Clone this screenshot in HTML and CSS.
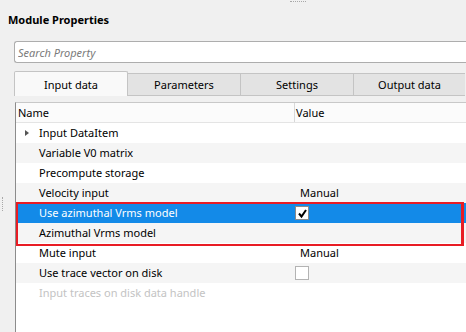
FILE: index.html
```html
<!DOCTYPE html>
<html lang="en">
<head>
    <meta charset="UTF-8">
    <title>Module Properties</title>
    <link rel="stylesheet" href="styles.css">
</head>
<body>
    <div class="top-grip"></div>
    <h2 class="title">Module Properties</h2>
    <input class="search" type="text" placeholder="Search Property">

    <div class="tabs">
        <div class="tab active">Input data</div>
        <div class="tab">Parameters</div>
        <div class="tab">Settings</div>
        <div class="tab last">Output data</div>
    </div>

    <div class="pane">
        <div class="side-grip"></div>
        <div class="grid">
            <div class="row head">
                <div class="name">Name</div>
                <div class="value">Value</div>
            </div>
            <div class="row">
                <div class="name"><span class="arrow"></span>Input DataItem</div>
                <div class="value"></div>
            </div>
            <div class="row alt">
                <div class="name">Variable V0 matrix</div>
                <div class="value"></div>
            </div>
            <div class="row">
                <div class="name">Precompute storage</div>
                <div class="value"></div>
            </div>
            <div class="row alt">
                <div class="name">Velocity input</div>
                <div class="value">Manual</div>
            </div>
            <div class="marked">
                <div class="row selected">
                    <div class="name">Use azimuthal Vrms model</div>
                    <div class="value"><span class="check on"><svg width="11" height="11" viewBox="0 0 11 11"><path d="M2 5.5 L4.5 8.5 L9 2" fill="none" stroke="#000" stroke-width="2"/></svg></span></div>
                </div>
                <div class="row alt">
                    <div class="name">Azimuthal Vrms model</div>
                    <div class="value"></div>
                </div>
            </div>
            <div class="row">
                <div class="name">Mute input</div>
                <div class="value">Manual</div>
            </div>
            <div class="row alt">
                <div class="name">Use trace vector on disk</div>
                <div class="value"><span class="check"></span></div>
            </div>
            <div class="row">
                <div class="name disabled">Input traces on disk data handle</div>
                <div class="value"></div>
            </div>
        </div>
    </div>
</body>
</html>
```

FILE: styles.css
```css
body {
    margin: 0;
    width: 466px;
    height: 332px;
    overflow: hidden;
    background: #f0f0f0;
    font-family: "Noto Sans", sans-serif;
    font-size: 11px;
    color: #000;
}
.top-grip {
    width: 16px;
    height: 0;
    margin: 1px 0 0 290px;
    border-top: 1px dotted #a8a8a8;
}
.title {
    margin: 0;
    padding: 9px 0 0 8px;
    height: 17px;
    font-size: 11px;
    font-weight: bold;
    line-height: 17px;
}
.search {
    display: block;
    box-sizing: border-box;
    width: 452px;
    height: 22px;
    margin: 13px 0 0 14px;
    padding: 0 3px;
    border: 1px solid #adadad;
    border-right: none;
    border-radius: 3px 0 0 3px;
    background: #fff;
    font-family: "Noto Sans", sans-serif;
    font-size: 11px;
}
.search::placeholder {
    color: #7a7a7a;
    font-style: italic;
}
.tabs {
    display: flex;
    align-items: flex-end;
    height: 25px;
    margin: 8px 0 0 14px;
}
.tab {
    box-sizing: border-box;
    flex: none;
    width: 114px;
    height: 23px;
    margin-right: -1px;
    border: 1px solid #c4c4c4;
    background: #e3e3e3;
    text-align: center;
    line-height: 21px;
}
.tab.last {
    width: 112px;
    margin-right: 0;
    border-right: none;
}
.tab.active {
    height: 25px;
    border-bottom: none;
    border-radius: 2px 2px 0 0;
    background: #f9f9f9;
    line-height: 25px;
}
.pane {
    display: flex;
    margin-top: 6px;
    height: 240px;
}
.side-grip {
    flex: none;
    width: 0;
    height: 14px;
    margin: 95px 12px 0 2px;
    border-left: 1px dotted #a8a8a8;
}
.grid {
    flex: 1;
    min-width: 0;
    border-top: 1px solid #c8c8c8;
    border-left: 1px solid #8c8c8c;
    background: #fff;
}
.row {
    display: flex;
    height: 20px;
    line-height: 20px;
}
.row.alt {
    background: #f5f5f5;
}
.row.head {
    height: 19px;
    line-height: 19px;
    background: #fbfbfb;
    border-bottom: 1px solid #e4e4e4;
}
.name {
    flex: none;
    box-sizing: border-box;
    width: 279px;
    padding-left: 23px;
    position: relative;
}
.value {
    flex: 1;
    padding-left: 5px;
}
.head .name {
    padding-left: 2px;
    border-right: 1px solid #d8d8d8;
}
.head .value {
    padding-left: 1px;
}
.selected {
    background: #138ae8;
    color: #fff;
}
.disabled {
    color: #c3c3c3;
}
.arrow {
    position: absolute;
    left: 9px;
    top: 7px;
    border-left: 4px solid #555;
    border-top: 3.5px solid transparent;
    border-bottom: 3.5px solid transparent;
}
.check {
    display: inline-block;
    box-sizing: border-box;
    width: 14px;
    height: 14px;
    margin: 3px 0 0 -5px;
    vertical-align: top;
    border: 1px solid #b3b3b3;
    background: #fff;
}
.check.on {
    border-color: #8a8a8a;
}
.check svg {
    display: block;
    margin: 1px;
}
.marked {
    position: relative;
}
.marked::after {
    content: "";
    position: absolute;
    left: 0;
    top: -1px;
    width: 448px;
    height: 44px;
    box-sizing: border-box;
    border: 2px solid #e81c24;
    border-right-width: 3px;
}
```
